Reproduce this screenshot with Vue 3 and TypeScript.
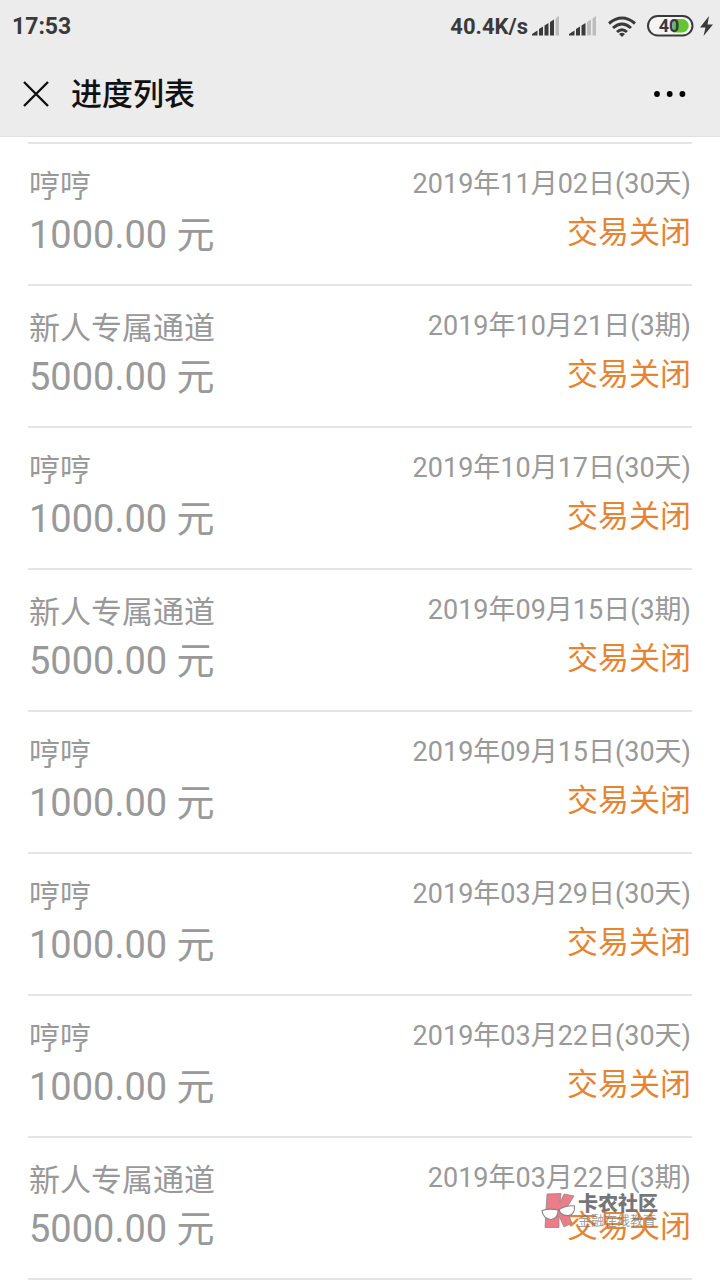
<script setup lang="ts">
interface Entry {
  name: string
  amount: string
  date: string
  status: string
}

const short = (date: string): Entry => ({
  name: '哼哼',
  amount: '1000.00 元',
  date: `${date}(30天)`,
  status: '交易关闭',
})
const long = (date: string): Entry => ({
  name: '新人专属通道',
  amount: '5000.00 元',
  date: `${date}(3期)`,
  status: '交易关闭',
})

const entries: Entry[] = [
  short('2019年11月02日'),
  long('2019年10月21日'),
  short('2019年10月17日'),
  long('2019年09月15日'),
  short('2019年09月15日'),
  short('2019年03月29日'),
  short('2019年03月22日'),
  long('2019年03月22日'),
]
</script>

<template>
  <div class="page">
    <header class="top">
      <div class="statusbar">
        <span class="clock">17:53</span>
        <div class="indicators">
          <span class="speed">40.4K/s</span>
          <svg class="signal" width="28" height="20" viewBox="0 0 28 20" aria-hidden="true">
            <path fill="#3a3a3a" d="M0 19.500V18L5.500 14.500v5zM7 13l4-2.500v9H7zM12.500 9.500l4-2.500v12.500h-4zM18 6l4-2.500v16h-4z" />
            <path fill="#bdbdbd" d="M23.500 2.500l3.500-2.500v19.500h-3.500z" />
          </svg>
          <svg class="signal second" width="28" height="20" viewBox="0 0 28 20" aria-hidden="true">
            <path fill="#3a3a3a" d="M0 19.500V18L5.500 14.500v5zM7 13l4-2.500v9H7zM12.500 9.500l4-2.500v12.500h-4z" />
            <path fill="#bdbdbd" d="M18 6l4-2.500v16h-4zM23.500 2.500l3.500-2.500v19.500h-3.500z" />
          </svg>
          <svg class="wifi" width="28" height="21" viewBox="0 0 28 21" aria-hidden="true">
            <g fill="none" stroke="#3a3a3a" stroke-width="3">
              <path d="M1 7.500Q14-3.500 27 7.500M5 12Q14 4 23 12M9 16Q14 11.500 19 16" />
            </g>
            <path fill="#3a3a3a" d="M11 18q3-2.500 6 0l-3 3z" />
          </svg>
          <svg class="battery" width="47" height="22" viewBox="0 0 47 22" aria-hidden="true">
            <rect x="1" y="1" width="44.500" height="19.500" rx="9.700" fill="#f4f4f4" stroke="#3a3a3a" stroke-width="2" />
            <path fill="#62c531" d="M26 4h9a6.700 6.700 0 0 1 0 13.500h-9z" />
            <text x="22" y="17" text-anchor="middle" class="level">40</text>
          </svg>
          <svg class="bolt" width="13" height="20" viewBox="0 0 13 20" aria-hidden="true">
            <path fill="#3a3a3a" d="M9 0L0 11.500h5.500L3.500 20 13 8.500H7.500z" />
          </svg>
        </div>
      </div>
      <div class="navbar">
        <button class="icon-btn" type="button" aria-label="关闭">
          <svg width="26" height="26" viewBox="0 0 26 26"><path d="M1 1l24 24M25 1L1 25" stroke="#111" stroke-width="2.400" fill="none" /></svg>
        </button>
        <h1 class="title">进度列表</h1>
        <button class="icon-btn more" type="button" aria-label="更多">
          <svg width="32" height="6" viewBox="0 0 32 6"><g fill="#000"><circle cx="3" cy="3" r="2.900" /><circle cx="15.700" cy="3" r="2.900" /><circle cx="28.400" cy="3" r="2.900" /></g></svg>
        </button>
      </div>
    </header>

    <main class="content">
      <ul class="list">
        <li v-for="(entry, i) in entries" :key="i" class="row">
          <div class="left">
            <div class="name">{{ entry.name }}</div>
            <div class="amount">{{ entry.amount }}</div>
          </div>
          <div class="right">
            <div class="date">{{ entry.date }}</div>
            <div class="status">{{ entry.status }}</div>
          </div>
        </li>
      </ul>
      <div class="brand">
        <svg width="36" height="36" viewBox="0 0 36 36" aria-hidden="true">
          <path fill="#e8707c" stroke="#8a7a7c" stroke-width="0.800" d="M6 2l14-.5-1 9 4-8.500 10 2-8 13 6 14-8 4-5-11v11.500H4z" />
          <path fill="#fff" stroke="#7d7577" stroke-width="1.100" d="M1 18.500q8-2.500 16-.5c.5 5-2 9-7 9.500-5 0-8.500-4-9-9zM18 17.500q8-4.500 15.500-3.500c.5 5-1.500 9-6 9.500-5 .5-8.500-2-9.500-6z" />
        </svg>
        <div class="brand-text">
          <div class="brand-name">卡农社区</div>
          <div class="brand-sub">金融在线教育</div>
        </div>
      </div>
    </main>
  </div>
</template>

<style>
body {
  margin: 0;
  background: #fff;
}
</style>

<style scoped>
.page {
  font-family: Roboto, "Noto Sans CJK SC", sans-serif;
  color: #999;
}
.top {
  background: #ececec;
  border-bottom: 1px solid #dfdfdf;
}
.statusbar {
  display: flex;
  justify-content: space-between;
  align-items: center;
  height: 52px;
  padding: 0 7px 0 12px;
  color: #3a3a3a;
  font-size: 23px;
  font-weight: 700;
}
.speed {
  font-size: 22px;
}
.indicators {
  display: flex;
  align-items: center;
}
.signal {
  margin-left: 4px;
}
.signal.second {
  margin-left: 9px;
}
.wifi {
  margin-left: 11px;
}
.battery {
  margin-left: 11px;
}
.bolt {
  margin-left: 6px;
}
.level {
  font-size: 18px;
  font-weight: 700;
  fill: #3a3a3a;
}
.navbar {
  display: flex;
  align-items: center;
  height: 84px;
  padding: 0 34px 0 23px;
}
.icon-btn {
  display: flex;
  padding: 0;
  border: 0;
  background: none;
}
.more {
  margin-left: auto;
}
.title {
  margin: 0 0 0 22px;
  padding-top: 2px;
  color: #111;
  font-size: 31px;
  font-weight: 500;
  line-height: 44px;
}
.content {
  position: relative;
  padding: 5px 28px 0;
}
.list {
  margin: 0;
  padding: 0;
  list-style: none;
  border-bottom: 2px solid #e4e4e4;
}
.row {
  display: flex;
  justify-content: space-between;
  padding: 18px 1px 24px;
  border-top: 2px solid #e4e4e4;
}
.left {
  padding-top: 2px;
}
.right {
  text-align: right;
}
.name {
  font-size: 31px;
  line-height: 46px;
}
.amount {
  font-size: 38px;
  line-height: 50px;
}
.date {
  font-size: 27px;
  line-height: 44px;
}
.status {
  color: #e6842f;
  font-size: 31px;
  line-height: 54px;
}
.brand {
  position: absolute;
  right: 62px;
  bottom: 52px;
  display: flex;
  align-items: center;
  color: #68686c;
  opacity: 0.9;
}
.brand-text {
  margin-left: 1px;
}
.brand-name {
  font-size: 20px;
  font-weight: 900;
  line-height: 22px;
}
.brand-sub {
  font-size: 13px;
  line-height: 12px;
  opacity: 0.7;
}
</style>
